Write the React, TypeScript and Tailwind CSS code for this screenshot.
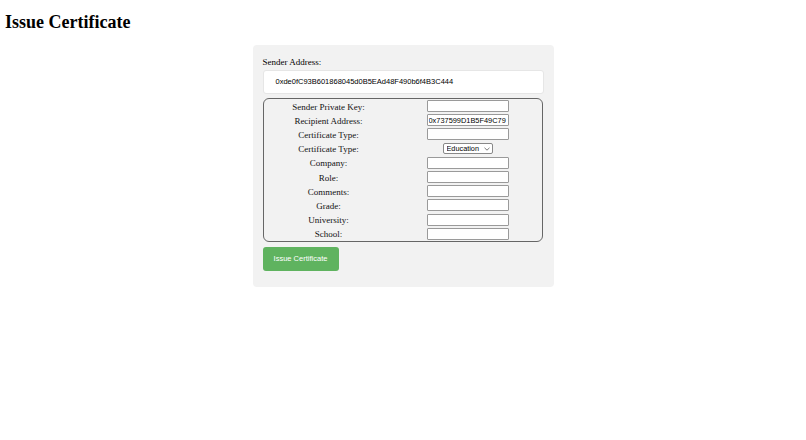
import { useState } from 'react';

const fields = [
  { label: 'Sender Private Key:', value: '' },
  { label: 'Recipient Address:', value: '0x737599D1B5F49C79' },
  { label: 'Certificate Type:', value: '' },
  { label: 'Certificate Type:', select: true },
  { label: 'Company:', value: '' },
  { label: 'Role:', value: '' },
  { label: 'Comments:', value: '' },
  { label: 'Grade:', value: '' },
  { label: 'University:', value: '' },
  { label: 'School:', value: '' },
];

export default function App() {
  const [certType, setCertType] = useState('Education');

  return (
    <div className="min-h-[440px] bg-white text-black" style={{ fontFamily: '"Liberation Serif", serif' }}>
      <h1 className="m-0 pl-[5px] pt-[12px] pb-[12px] text-[18px] font-bold leading-[21px]">Issue Certificate</h1>

      <div className="mx-auto w-[301px] rounded-[4px] bg-[#f2f2f2] px-[10px] pt-[12px] pb-[16px]">
        <p className="m-0 text-[9px] leading-[10px]">Sender Address:</p>

        <div
          className="mt-[3px] flex h-[24px] items-center rounded-[3px] border border-[#e6e6e6] bg-white pl-[12px] text-[7.5px] text-black"
          style={{ fontFamily: '"Liberation Sans", Arial, sans-serif' }}
        >
          0xde0fC93B601868045d0B5EAd48F490b6f4B3C444
        </div>

        <div className="mt-[4px] w-[280px] rounded-[6px] border border-[#666]">
          {fields.map((field, i) => (
            <div key={i} className="grid h-[14.2px] grid-cols-[130px_1fr] items-center">
              <span className="pt-[1px] text-center text-[9px] leading-[10px] text-[#111]">{field.label}</span>
              <div className="flex justify-center">
                {field.select ? (
                  <div className="relative">
                    <select
                      value={certType}
                      onChange={(e) => setCertType(e.target.value)}
                      className="block h-[11px] w-[50px] appearance-none rounded-[2px] border border-[#888] bg-white pl-[3px] text-[7.3px] leading-[9px] outline-none"
                      style={{ fontFamily: '"Liberation Sans", Arial, sans-serif' }}
                    >
                      <option>Education</option>
                      <option>Employment</option>
                    </select>
                    <svg
                      className="pointer-events-none absolute right-[3px] top-[3.5px] h-[4px] w-[6px]"
                      viewBox="0 0 6 4"
                      fill="none"
                      stroke="#555"
                      strokeWidth="0.8"
                    >
                      <path d="M0.5 0.8 L3 3.2 L5.5 0.8" />
                    </svg>
                  </div>
                ) : (
                  <input
                    defaultValue={field.value}
                    className="block h-[12px] w-[82px] rounded-[1px] border border-[#9a9a9a] bg-white px-[1px] text-[7.4px] outline-none"
                    style={{ fontFamily: '"Liberation Sans", Arial, sans-serif' }}
                  />
                )}
              </div>
            </div>
          ))}
        </div>

        <button
          type="button"
          className="mt-[5px] block h-[24px] w-[76px] rounded-[3px] bg-[#5fb35f] text-[7.5px] text-white"
          style={{ fontFamily: '"Liberation Sans", Arial, sans-serif' }}
        >
          Issue Certificate
        </button>
      </div>
    </div>
  );
}
